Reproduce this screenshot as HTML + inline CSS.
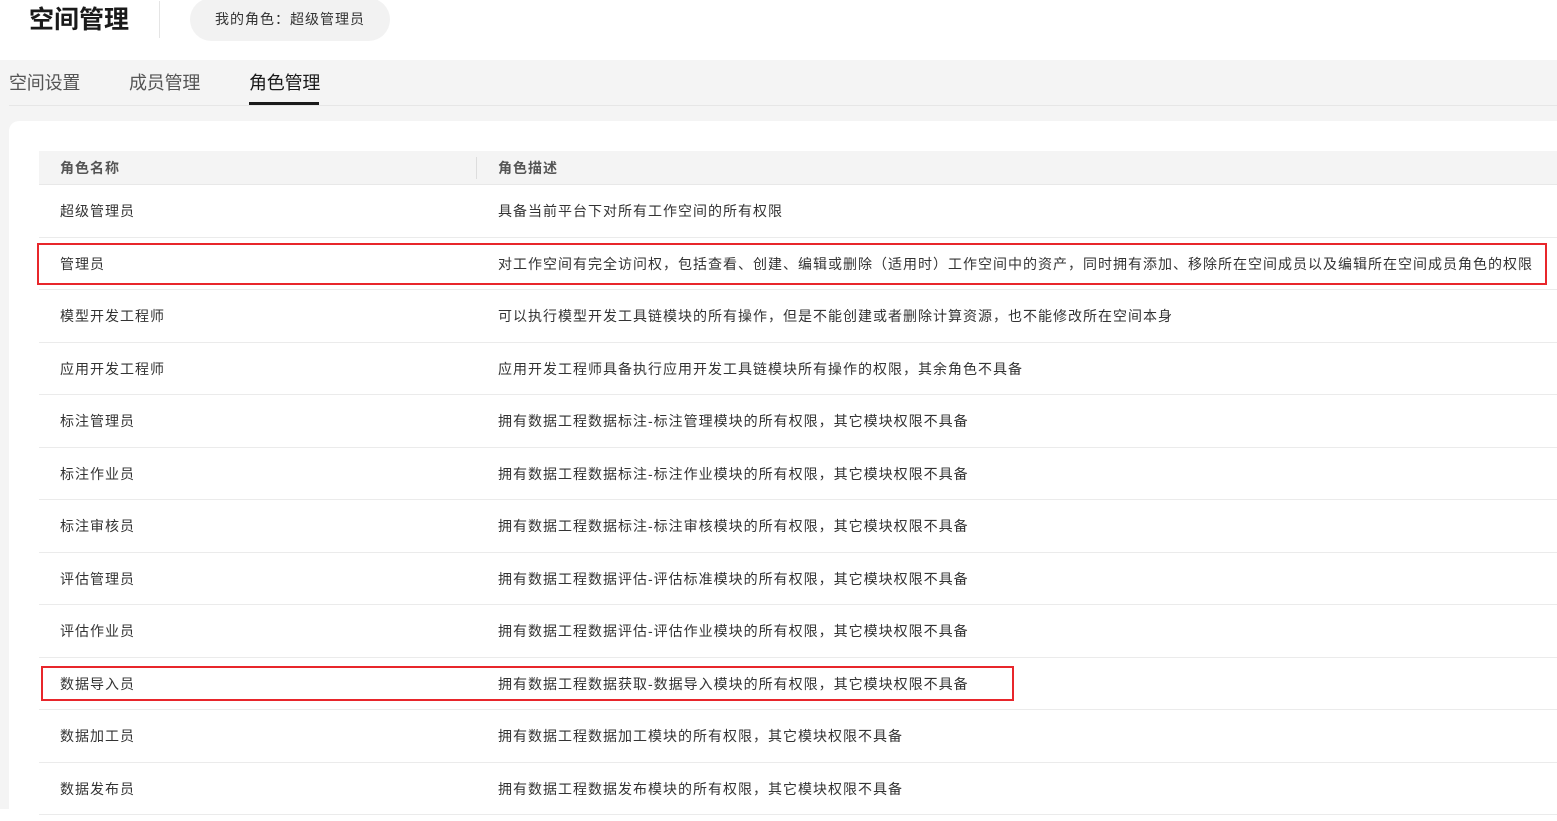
<!DOCTYPE html>
<html><head><meta charset="utf-8"><style>
*{margin:0;padding:0;box-sizing:border-box}
body{width:1557px;height:809px;overflow:hidden;background:#fff;font-family:"Liberation Sans","Noto Sans CJK SC",sans-serif;position:relative;color:#333}
.title{position:absolute;left:29px;top:4px;font-size:25px;font-weight:bold;color:#1a1a1a;line-height:32px}
.vline{position:absolute;left:159px;top:1px;width:1px;height:37px;background:#e5e5e5}
.pill{position:absolute;left:190px;top:-2px;width:200px;height:43px;border-radius:22px;background:#f2f2f2;font-size:14px;color:#333;text-align:center;line-height:43px;letter-spacing:1px}
.gray{position:absolute;left:0;top:60px;width:1557px;height:749px;background:#f4f4f4}
.tab{position:absolute;top:70px;font-size:18px;color:#555;line-height:26px;letter-spacing:-0.2px}
.tabline{position:absolute;left:9px;top:105px;width:1548px;height:1px;background:#e6e6e6}
.ul{position:absolute;left:249px;top:102px;width:70px;height:3px;background:#1a1a1a}
.card{position:absolute;left:9px;top:121px;width:1560px;height:700px;background:#fff;border-radius:10px}
.th{position:absolute;left:39px;top:151px;width:1518px;height:34px;background:#f4f4f4;border-bottom:1px solid #e8e8e8}
.th span{position:absolute;top:0;line-height:34px;font-size:14px;font-weight:bold;color:#555;letter-spacing:1px}
.th i{position:absolute;left:437px;top:6px;width:1px;height:22px;background:#ddd}
.row{position:absolute;left:39px;width:1518px;height:52.5px;border-bottom:1px solid #ebebeb;font-size:14px;color:#333;letter-spacing:1px}
.row span{position:absolute;line-height:52px;top:0;white-space:nowrap}
.a{left:21px}.b{left:459px}
.red{position:absolute;border:2px solid #e8262b}
</style></head><body>
<div class="title">空间管理</div><div class="vline"></div>
<div class="pill">我的角色：超级管理员</div>
<div class="gray"></div>
<div class="tab" style="left:9px">空间设置</div>
<div class="tab" style="left:129px">成员管理</div>
<div class="tab" style="left:249px;color:#1a1a1a">角色管理</div>
<div class="tabline"></div><div class="ul"></div>
<div class="card"></div>
<div class="th"><span style="left:21px">角色名称</span><i></i><span style="left:459px">角色描述</span></div>
<div class="row" style="top:185px"><span class="a">超级管理员</span><span class="b">具备当前平台下对所有工作空间的所有权限</span></div>
<div class="row" style="top:237.5px"><span class="a">管理员</span><span class="b">对工作空间有完全访问权，包括查看、创建、编辑或删除（适用时）工作空间中的资产，同时拥有添加、移除所在空间成员以及编辑所在空间成员角色的权限</span></div>
<div class="row" style="top:290px"><span class="a">模型开发工程师</span><span class="b">可以执行模型开发工具链模块的所有操作，但是不能创建或者删除计算资源，也不能修改所在空间本身</span></div>
<div class="row" style="top:342.5px"><span class="a">应用开发工程师</span><span class="b">应用开发工程师具备执行应用开发工具链模块所有操作的权限，其余角色不具备</span></div>
<div class="row" style="top:395px"><span class="a">标注管理员</span><span class="b">拥有数据工程数据标注-标注管理模块的所有权限，其它模块权限不具备</span></div>
<div class="row" style="top:447.5px"><span class="a">标注作业员</span><span class="b">拥有数据工程数据标注-标注作业模块的所有权限，其它模块权限不具备</span></div>
<div class="row" style="top:500px"><span class="a">标注审核员</span><span class="b">拥有数据工程数据标注-标注审核模块的所有权限，其它模块权限不具备</span></div>
<div class="row" style="top:552.5px"><span class="a">评估管理员</span><span class="b">拥有数据工程数据评估-评估标准模块的所有权限，其它模块权限不具备</span></div>
<div class="row" style="top:605px"><span class="a">评估作业员</span><span class="b">拥有数据工程数据评估-评估作业模块的所有权限，其它模块权限不具备</span></div>
<div class="row" style="top:657.5px"><span class="a">数据导入员</span><span class="b">拥有数据工程数据获取-数据导入模块的所有权限，其它模块权限不具备</span></div>
<div class="row" style="top:710px"><span class="a">数据加工员</span><span class="b">拥有数据工程数据加工模块的所有权限，其它模块权限不具备</span></div>
<div class="row" style="top:762.5px"><span class="a">数据发布员</span><span class="b">拥有数据工程数据发布模块的所有权限，其它模块权限不具备</span></div>
<div class="red" style="left:37px;top:243px;width:1510px;height:42px"></div>
<div class="red" style="left:41px;top:666px;width:973px;height:35px"></div>
</body></html>
